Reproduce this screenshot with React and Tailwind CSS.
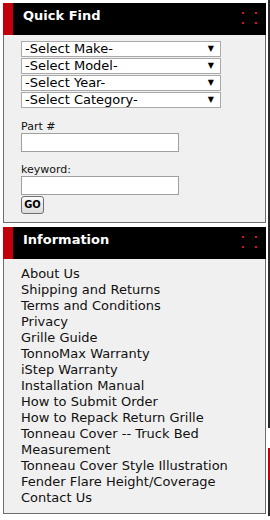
import React from 'react';

const font = { fontFamily: '"DejaVu Sans", Verdana, sans-serif' };

const links = [
  'About Us',
  'Shipping and Returns',
  'Terms and Conditions',
  'Privacy',
  'Grille Guide',
  'TonnoMax Warranty',
  'iStep Warranty',
  'Installation Manual',
  'How to Submit Order',
  'How to Repack Return Grille',
  'Tonneau Cover -- Truck Bed Measurement',
  'Tonneau Cover Style Illustration',
  'Fender Flare Height/Coverage',
  'Contact Us',
];

function Header({ title }) {
  return (
    <div className="flex h-[32px] bg-black">
      <div className="w-[10px] bg-[#c1000b]" />
      <div className="flex-1 pl-[10px] pt-[5px] text-[13px] leading-[16px] font-bold text-white">{title}</div>
      <div className="grid grid-cols-2 gap-x-[11px] gap-y-[8px] pt-[9px] pr-[9px] h-fit">
        <span className="block w-[2px] h-[2px] bg-[#e0101a]" />
        <span className="block w-[2px] h-[2px] bg-[#e0101a]" />
        <span className="block w-[2px] h-[2px] bg-[#e0101a]" />
        <span className="block w-[2px] h-[2px] bg-[#e0101a]" />
      </div>
    </div>
  );
}

function FakeSelect({ label }) {
  return (
    <div className="flex items-center justify-between h-[16px] w-[200px] bg-white border border-[#a9a9a9] pl-[3px] pr-[6px] text-[13px] leading-[14px] text-black">
      <span>{label}</span>
      <span className="text-[8px]">▼</span>
    </div>
  );
}

export default function App() {
  return (
    <div className="relative flex w-[270px] h-[520px] bg-white text-[#111]" style={font}>
      <div className="w-[266px] pl-[3px] pt-[3px] flex flex-col">
        {/* Quick Find */}
        <div>
          <Header title="Quick Find" />
          <div className="bg-[#f0f0f0] border-x border-b border-[#6e6e6e] pl-[17px] pt-[6px] pb-[8px]">
            <div className="flex flex-col gap-[1px]">
              {['-Select Make-', '-Select Model-', '-Select Year-', '-Select Category-'].map((s) => (
                <FakeSelect key={s} label={s} />
              ))}
            </div>
            <div className="mt-[12px] text-[11px] leading-[13px]">Part #</div>
            <div className="w-[158px] h-[19px] bg-white border border-[#a0a0a0]" />
            <div className="mt-[11px] text-[11px] leading-[13px]">keyword:</div>
            <div className="w-[158px] h-[19px] bg-white border border-[#a0a0a0]" />
            <button
              className="block mt-[1px] w-[23px] h-[18px] rounded-[3px] border border-[#707070] bg-gradient-to-b from-[#fbfbfb] to-[#dcdcdc] text-[11px] leading-[14px] font-bold text-black"
              style={{ fontFamily: '"DejaVu Sans Condensed", "Liberation Sans Narrow", sans-serif' }}
            >
              GO
            </button>
          </div>
        </div>

        {/* Information */}
        <div className="mt-[4px]">
          <Header title="Information" />
          <div className="bg-[#f0f0f0] border-x border-b border-[#6e6e6e] pl-[17px] pr-[6px] pt-[7px] pb-[7px]">
            <ul className="text-[13px] leading-[16px]">
              {links.map((l) => (
                <li key={l}>{l}</li>
              ))}
            </ul>
          </div>
        </div>
      </div>

      {/* edge of neighbouring column */}
      <div className="ml-[2px] w-[2px] flex flex-col">
        <div className="h-[428px] bg-[#2b2b2b]" />
        <div className="h-[20px] bg-white" />
        <div className="h-[32px] bg-[#c1000b]" />
        <div className="h-[36px] bg-[#2b2b2b]" />
      </div>
    </div>
  );
}
